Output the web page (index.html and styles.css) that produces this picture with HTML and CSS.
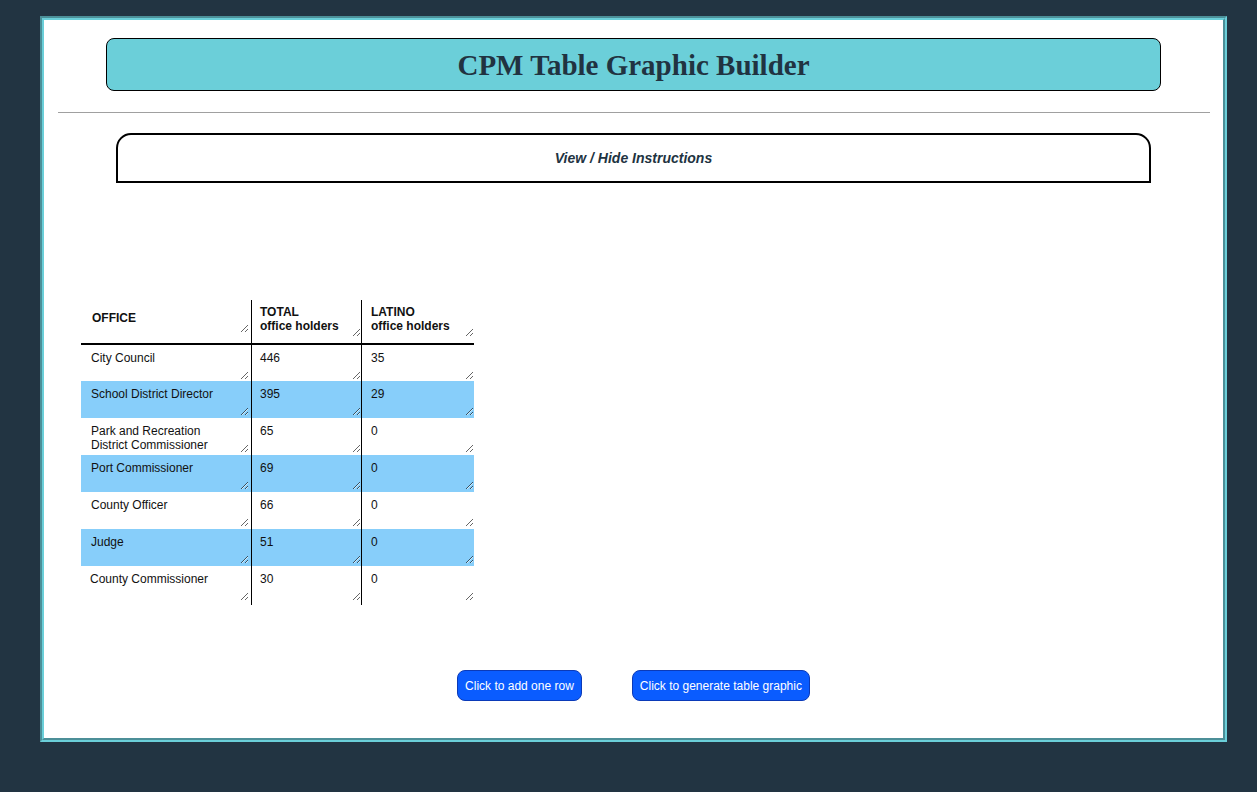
FILE: index.html
```html
<!DOCTYPE html>
<html>
<head>
<meta charset="utf-8">
<title>CPM Table Graphic Builder</title>
<link rel="stylesheet" href="styles.css">
</head>
<body>
<div class="frame">
  <div class="frame-inner">
    <div class="title-box"><h1 class="title">CPM Table Graphic Builder</h1></div>
    <hr class="rule">
    <div class="instructions">View / Hide Instructions</div>
    <div class="table-wrap">
      <table class="data">
        <thead>
          <tr>
            <th class="c1"><textarea class="hd hd-single">OFFICE</textarea></th>
            <th class="c2"><textarea class="hd">TOTAL
office holders</textarea></th>
            <th class="c3"><textarea class="hd">LATINO
office holders</textarea></th>
          </tr>
        </thead>
        <tbody>
          <tr><td class="c1"><textarea>City Council</textarea></td><td class="c2"><textarea>446</textarea></td><td class="c3"><textarea>35</textarea></td></tr>
          <tr class="alt"><td class="c1"><textarea>School District Director</textarea></td><td class="c2"><textarea>395</textarea></td><td class="c3"><textarea>29</textarea></td></tr>
          <tr><td class="c1"><textarea>Park and Recreation
District Commissioner</textarea></td><td class="c2"><textarea>65</textarea></td><td class="c3"><textarea>0</textarea></td></tr>
          <tr class="alt"><td class="c1"><textarea>Port Commissioner</textarea></td><td class="c2"><textarea>69</textarea></td><td class="c3"><textarea>0</textarea></td></tr>
          <tr><td class="c1"><textarea>County Officer</textarea></td><td class="c2"><textarea>66</textarea></td><td class="c3"><textarea>0</textarea></td></tr>
          <tr class="alt"><td class="c1"><textarea>Judge</textarea></td><td class="c2"><textarea>51</textarea></td><td class="c3"><textarea>0</textarea></td></tr>
          <tr class="last"><td class="c1"><textarea class="shift">County Commissioner</textarea></td><td class="c2"><textarea>30</textarea></td><td class="c3"><textarea>0</textarea></td></tr>
        </tbody>
      </table>
    </div>
    <div class="buttons">
      <button class="btn">Click to add one row</button>
      <button class="btn">Click to generate table graphic</button>
    </div>
  </div>
</div>
</body>
</html>
```

FILE: styles.css
```css
html, body {
  margin: 0;
  padding: 0;
}
body {
  background: #223442;
  padding: 16px 30px 0 40px;
  height: 792px;
  box-sizing: border-box;
  font-family: "Liberation Sans", Arial, sans-serif;
}
.frame {
  border-style: solid;
  border-width: 2px;
  border-color: #4c8f98 #6bcfd9 #6bcfd9 #4c8f98;
}
.frame-inner {
  background: #ffffff;
  border-style: solid;
  border-width: 2px;
  border-color: #6bcfd9 #4c8f98 #4c8f98 #6bcfd9;
  padding: 18px 0 36px 0;
  height: 722px;
  box-sizing: border-box;
}
.title-box {
  margin: 0 62px 0 62px;
  height: 53px;
  box-sizing: border-box;
  background: #6bcfd9;
  border: 1px solid #000;
  border-radius: 8px;
  display: flex;
  align-items: center;
  justify-content: center;
}
.title {
  margin: 0;
  font-family: "Liberation Serif", "Times New Roman", serif;
  font-weight: bold;
  font-size: 29px;
  color: #213341;
  line-height: 32px;
}
.rule {
  margin: 21px 13px 0 14px;
  border: 0;
  border-top: 1px solid #a0a0a0;
  height: 0;
}
.instructions {
  margin: 20px 72px 0 72px;
  height: 50px;
  box-sizing: border-box;
  border: 2px solid #000;
  border-radius: 15px 15px 0 0;
  display: flex;
  align-items: center;
  justify-content: center;
  font-size: 14px;
  font-weight: bold;
  font-style: italic;
  color: #213341;
  padding-bottom: 1px;
}
.table-wrap {
  margin: 117px 0 0 37px;
  height: 306px;
}
.data {
  border-collapse: collapse;
  border-spacing: 0;
}
.data th, .data td {
  padding: 0;
  vertical-align: top;
}
.data .c1 { width: 170px; border-right: 1px solid #000; }
.data .c2 { width: 109px; border-right: 1px solid #000; }
.data .c3 { width: 112px; }
.data thead tr { height: 44px; border-bottom: 2px solid #000; }
.data tbody tr { height: 37px; }
.data tbody tr.last { height: 39px; }
.data tbody tr.alt { background: #87cefa; }
.data textarea {
  display: block;
  box-sizing: border-box;
  width: 100%;
  height: 35px;
  margin: 0;
  border: 0;
  background: transparent;
  font-family: "Liberation Sans", Arial, sans-serif;
  font-size: 12px;
  line-height: 14px;
  color: #111;
  padding: 6px 2px 0 10px;
  overflow: hidden;
  resize: both;
  outline: none;
}
.data .c1 textarea { width: 168px; }
.data .c2 textarea { width: 109px; padding-left: 8px; }
.data .c3 textarea { width: 112px; padding-left: 9px; }
.data textarea.hd {
  font-weight: bold;
  height: 37px;
  padding-top: 5px;
}
.data textarea.hd-single {
  padding-top: 11px;
  height: 33px;
  padding-left: 11px;
}
.data textarea.shift { padding-left: 9px; }
.buttons {
  margin-top: 64px;
  display: flex;
  justify-content: center;
  gap: 50px;
}
.btn {
  height: 31px;
  box-sizing: border-box;
  background: #0a5cff;
  border: 1px solid #0b3ab8;
  border-radius: 8px;
  color: #ffffff;
  font-family: "Liberation Sans", Arial, sans-serif;
  font-size: 12px;
  padding: 0 7px;
  white-space: nowrap;
}
```
